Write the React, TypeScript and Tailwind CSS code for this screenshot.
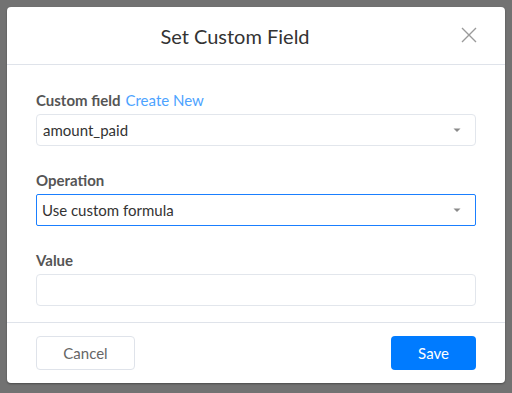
import React from "react";

function Caret() {
  return (
    <svg width="10" height="6" viewBox="0 0 10 6" className="shrink-0">
      <path d="M1.5 1.5 L8.5 1.5 L5 5 Z" fill="#8a8a8a" />
    </svg>
  );
}

export default function App() {
  return (
    <div
      className="w-[512px] h-[393px] bg-[#727272] pt-[7px] pl-[7px]"
      style={{ fontFamily: "Lato, 'Open Sans', sans-serif" }}
    >
      <div className="w-[498px] h-[376px] bg-white rounded-[4px] flex flex-col shadow-[0_1px_2px_rgba(0,0,0,0.35)]">
        {/* Header */}
        <div className="h-[58px] flex items-center border-b border-[#dfe3ea] pl-[20px] pr-[28px]">
          <div className="flex-1 text-center text-[20px] text-[#333] pr-[18px]">Set Custom Field</div>
          <svg width="16" height="16" viewBox="0 0 16 16" className="mt-[-1px]">
            <path d="M1 1 L15 15 M15 1 L1 15" stroke="#9a9a9a" strokeWidth="1.4" fill="none" />
          </svg>
        </div>
        {/* Body */}
        <div className="flex-1 px-[29px] pt-[25px] flex flex-col gap-[24px]">
          <div className="flex flex-col gap-[4px]">
            <div className="h-[20px] flex items-center text-[15px] leading-[20px]">
              <span className="font-bold text-[#555]">Custom field</span>
              <span className="text-[#4da3ff] ml-[5px]">Create New</span>
            </div>
            <div className="h-[32px] border border-[#e2e6ec] rounded-[4px] flex items-center pl-[6px] pr-[13px] text-[15px] text-[#333]">
              <span className="flex-1">amount_paid</span>
              <Caret />
            </div>
          </div>
          <div className="flex flex-col gap-[4px]">
            <div className="h-[20px] flex items-center text-[15px] leading-[20px] font-bold text-[#555]">
              Operation
            </div>
            <div className="h-[32px] border border-[#1a7fff] rounded-[2px] flex items-center pl-[5px] pr-[13px] text-[15px] text-[#333]">
              <span className="flex-1">Use custom formula</span>
              <Caret />
            </div>
          </div>
          <div className="flex flex-col gap-[4px]">
            <div className="h-[20px] flex items-center text-[15px] leading-[20px] font-bold text-[#555]">
              Value
            </div>
            <div className="h-[32px] border border-[#e2e6ec] rounded-[4px]" />
          </div>
        </div>
        {/* Footer */}
        <div className="h-[61px] border-t border-[#dfe3ea] px-[29px] flex items-start pt-[13px] justify-between">
          <div className="w-[99px] h-[34px] border border-[#dfe3ea] rounded-[4px] flex items-center justify-center text-[15px] text-[#666]">
            Cancel
          </div>
          <div className="w-[85px] h-[34px] bg-[#007bff] rounded-[4px] flex items-center justify-center text-[15px] text-white">
            Save
          </div>
        </div>
      </div>
    </div>
  );
}
